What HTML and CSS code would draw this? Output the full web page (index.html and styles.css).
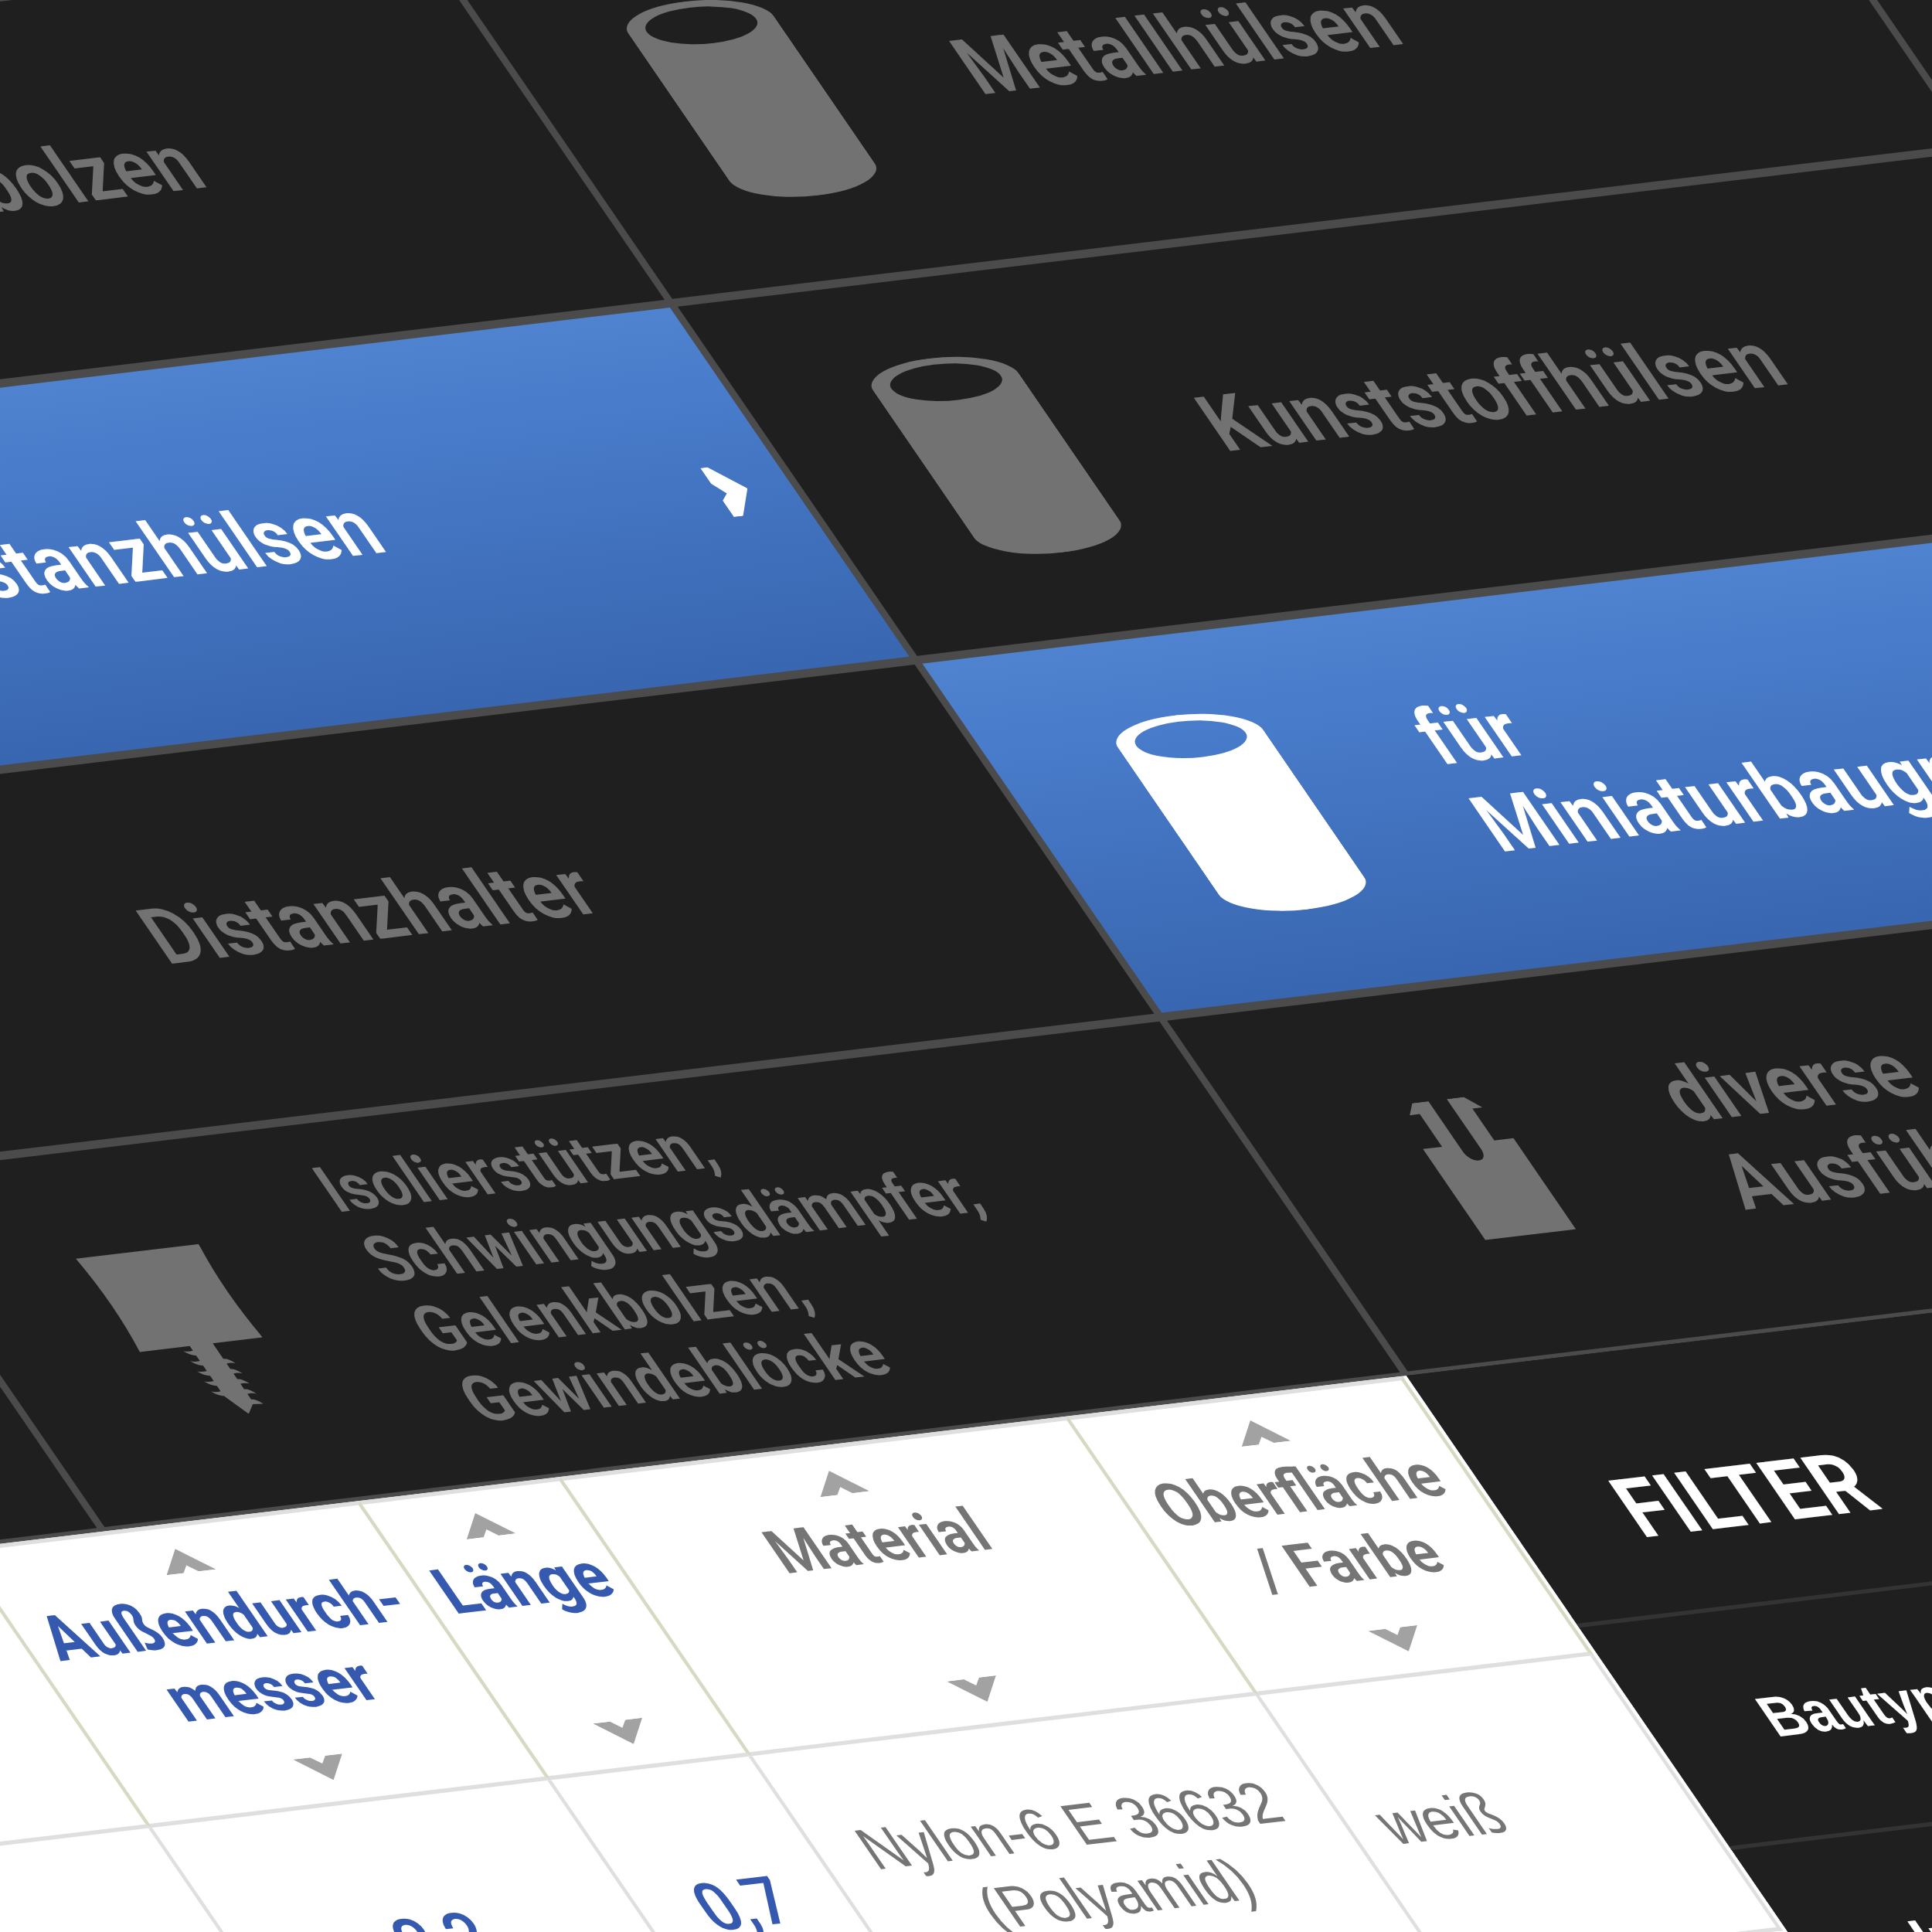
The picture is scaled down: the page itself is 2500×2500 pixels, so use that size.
FILE: index.html
```html
<!DOCTYPE html>
<html lang="de">
<head>
<meta charset="utf-8">
<title>Distanzhülsen für Miniaturbaugruppen</title>
<link rel="stylesheet" href="styles.css">
</head>
<body>
<svg class="symbols" aria-hidden="true">
  <symbol id="sleeve" viewBox="0 0 192 252">
    <path fill-rule="evenodd" d="M0 31a96 31 0 0 1 192 0v190a96 31 0 0 1-192 0zM24 31a72 23 0 0 0 144 0a72 23 0 0 0-144 0z"/>
  </symbol>
  <symbol id="clip" viewBox="0 0 142 179">
    <path d="M12 56h25V14H24L37 0h21v64c0 18 24 18 24 0V0h22l14 15h-13v41h25v117H12z"/>
  </symbol>
  <symbol id="buffer" viewBox="-12 -20 172 229">
    <path d="M0 0h160q-9 60 0 120H95v20q6 0 11 7q-5-2-11-1v7q6 0 11 7q-5-2-11-1v7q6 0 11 7q-5-2-11-1v7q6 0 11 7q-5-2-11-1v7q6 0 11 7l-13-1-13 11-15-25q-6 0-12-7q6 2 12 1v-7q-6 0-12-7q6 2 12 1v-7q-6 0-12-7q6 2 12 1v-7q-6 0-12-7q6 2 12 1v-7q-6 0-12-7q6 2 12 1V120H0q9-60 0-120z"/>
  </symbol>
  <symbol id="chevron" viewBox="0 0 40 63">
    <path d="M0 0H9L40 31L12 63H0V42L11 34L0 20z"/>
  </symbol>
  <symbol id="arrow" viewBox="0 0 64 30">
    <path d="M32 0L64 30H42L32 21L22 30H0z"/>
  </symbol>
</svg>
<div class="plane">
  <nav class="menu">
    <ul class="menu-column"><li></li><li></li><li></li><li></li></ul>
    <ul class="menu-column">
      <li><a class="item" href="#"><span class="icon"></span><span class="label">Abstandsbolzen</span></a></li>
      <li><a class="item active" href="#"><span class="icon"></span><span class="label">Distanzhülsen</span><svg class="chevron"><use href="#chevron"/></svg></a></li>
      <li><a class="item" href="#"><span class="icon"></span><span class="label">Distanzhalter</span></a></li>
      <li><a class="item" href="#"><span class="icon"><svg class="buffer"><use href="#buffer"/></svg></span><span class="label small">Isolierstützen,<br>Schwingungsdämpfer,<br>Gelenkbolzen,<br>Gewindeblöcke</span></a></li>
    </ul>
    <ul class="menu-column">
      <li><a class="item" href="#"><span class="icon"><svg class="sleeve"><use href="#sleeve"/></svg></span><span class="label">Metallhülsen</span></a></li>
      <li><a class="item" href="#"><span class="icon"><svg class="sleeve"><use href="#sleeve"/></svg></span><span class="label">Kunststoffhülsen</span></a></li>
      <li><a class="item active" href="#"><span class="icon"><svg class="sleeve"><use href="#sleeve"/></svg></span><span class="label">für<br>Miniaturbaugruppen</span></a></li>
      <li><a class="item" href="#"><span class="icon"><svg class="clip"><use href="#clip"/></svg></span><span class="label">diverse<br>Ausführungen</span></a></li>
    </ul>
    <ul class="menu-column"><li></li><li></li><li></li><li></li></ul>
  </nav>
  <main class="content">
    <div class="results">
      <table class="products">
        <colgroup><col class="col-rest"><col class="col-diameter"><col class="col-diameter"><col class="col-length"><col class="col-material"><col class="col-surface"></colgroup>
        <thead>
          <tr>
            <th></th>
            <th><div class="sort key"><svg class="arrow"><use href="#arrow"/></svg><span>Innendurch-<br>messer</span><svg class="arrow down"><use href="#arrow"/></svg></div></th>
            <th><div class="sort key"><svg class="arrow"><use href="#arrow"/></svg><span>Außendurch-<br>messer</span><svg class="arrow down"><use href="#arrow"/></svg></div></th>
            <th><div class="sort key"><svg class="arrow"><use href="#arrow"/></svg><span>Länge</span><svg class="arrow down"><use href="#arrow"/></svg></div></th>
            <th><div class="sort"><svg class="arrow"><use href="#arrow"/></svg><span>Material</span><svg class="arrow down"><use href="#arrow"/></svg></div></th>
            <th><div class="sort"><svg class="arrow"><use href="#arrow"/></svg><span>Oberfläche<br>/ Farbe</span><svg class="arrow down"><use href="#arrow"/></svg></div></th>
          </tr>
        </thead>
        <tbody>
          <tr>
            <td></td>
            <td></td>
            <td class="value">2,2</td>
            <td class="value">0,7</td>
            <td>Nylon-6 E 36632<br>(Polyamid)</td>
            <td class="surface">weiß</td>
          </tr>
        </tbody>
      </table>
    </div>
    <aside class="filter">
      <h2>FILTER</h2>
      <a class="facet" href="#">Bautyp</a>
      <a class="facet" href="#">Innendurchmesser</a>
    </aside>
  </main>
</div>
</body>
</html>
```
FILE: styles.css
```css
* {
  box-sizing: border-box;
}

html,
body {
  height: 100%;
}

body {
  margin: 0;
  overflow: hidden;
  background: #1f1f1f;
  font-family: Roboto, "Liberation Sans", sans-serif;
  font-weight: 600;
}

a {
  color: inherit;
  text-decoration: none;
}

ul {
  margin: 0;
  padding: 0;
  list-style: none;
}

svg {
  display: block;
  fill: currentColor;
}

.symbols {
  display: none;
}

/* The whole interface lies on one tilted surface. */
.plane {
  width: 6782px;
  transform-origin: 0 0;
  transform: matrix(0.993, -0.1187, 0.69, 1.0063, -2819, 328);
}

/* Category menu */
.menu {
  display: grid;
  grid-template-columns: repeat(4, 1fr);
  column-gap: 10px;
  padding-bottom: 5px;
  border-top: 10px solid #4b4b4b;
  background: #4b4b4b;
}

.menu-column {
  display: grid;
  grid-template-rows: repeat(3, 449px) 451px;
  row-gap: 10px;
}

.menu-column li {
  display: grid;
  background: #1f1f1f;
}

.item {
  display: flex;
  align-items: center;
  padding-right: 56px;
  color: #727272;
}

.item.active {
  color: #fff;
  background: linear-gradient(#4f83d0, #477ac8 30%, #3966b0);
}

.icon {
  display: flex;
  justify-content: center;
  width: 522px;
  margin-right: 18px;
  padding-bottom: 6px;
}

.sleeve {
  width: 190px;
  height: 250px;
}

.clip {
  width: 142px;
  height: 179px;
}

.buffer {
  width: 172px;
  height: 229px;
}

.label {
  flex: 1;
  padding-bottom: 16px;
  font-size: 96px;
  line-height: 112px;
}

.label.small {
  font-size: 79px;
  line-height: 90px;
}

.chevron {
  width: 40px;
  height: 63px;
  margin-top: 4px;
}

/* Product list and filter panel */
.content {
  display: grid;
  grid-template-columns: 1fr 1fr;
}

.results {
  padding-right: 5px;
  background: #fff;
}

.products {
  width: 100%;
  table-layout: fixed;
  border-collapse: separate;
  border-spacing: 0;
  color: #757575;
}

.col-diameter {
  width: 520px;
}

.col-length {
  width: 262px;
}

.col-material {
  width: 661px;
}

.col-surface {
  width: 436px;
}

.products th,
.products td {
  padding: 0;
  border-right: 5px solid #dfdfdf;
  border-bottom: 5px solid #dfdfdf;
  text-align: center;
}

.products th {
  border-top: 5px solid #dfdfdf;
  border-right-color: #d7dac3;
  font-size: 74px;
  font-weight: 600;
  line-height: 90px;
}

.sort {
  display: flex;
  flex-direction: column;
  align-items: center;
  gap: 16px;
  height: 349px;
  padding: 26px 0;
}

.sort span {
  flex: 1;
}

.sort.key {
  font-size: 78px;
  font-weight: 700;
}

.key,
.products .value {
  color: #3659b0;
}

.arrow {
  width: 64px;
  height: 30px;
  color: #a2a2a2;
}

.down {
  transform: rotate(180deg);
}

.products td {
  height: 354px;
  padding: 0 8px 6px 0;
  font-family: "Liberation Sans", Arial, sans-serif;
  font-size: 72px;
  font-weight: 400;
  line-height: 88px;
}

.products .value {
  padding: 0;
  font-family: Roboto, "Liberation Sans", sans-serif;
  font-size: 82px;
  font-weight: 500;
}

.products .surface {
  padding-left: 40px;
  text-align: left;
}

.filter {
  background: #1f1f1f;
  color: #fff;
}

.filter h2 {
  margin: 0;
  padding: 134px 150px 71px;
  border-bottom: 5px solid #333;
  font-size: 102px;
  font-weight: 700;
  line-height: 114px;
}

.facet {
  display: block;
  padding: 92px 148px 104px;
  border-bottom: 5px solid #333;
  font-family: "Liberation Sans", Arial, sans-serif;
  font-size: 70px;
  font-weight: 700;
  line-height: 85px;
}
```
